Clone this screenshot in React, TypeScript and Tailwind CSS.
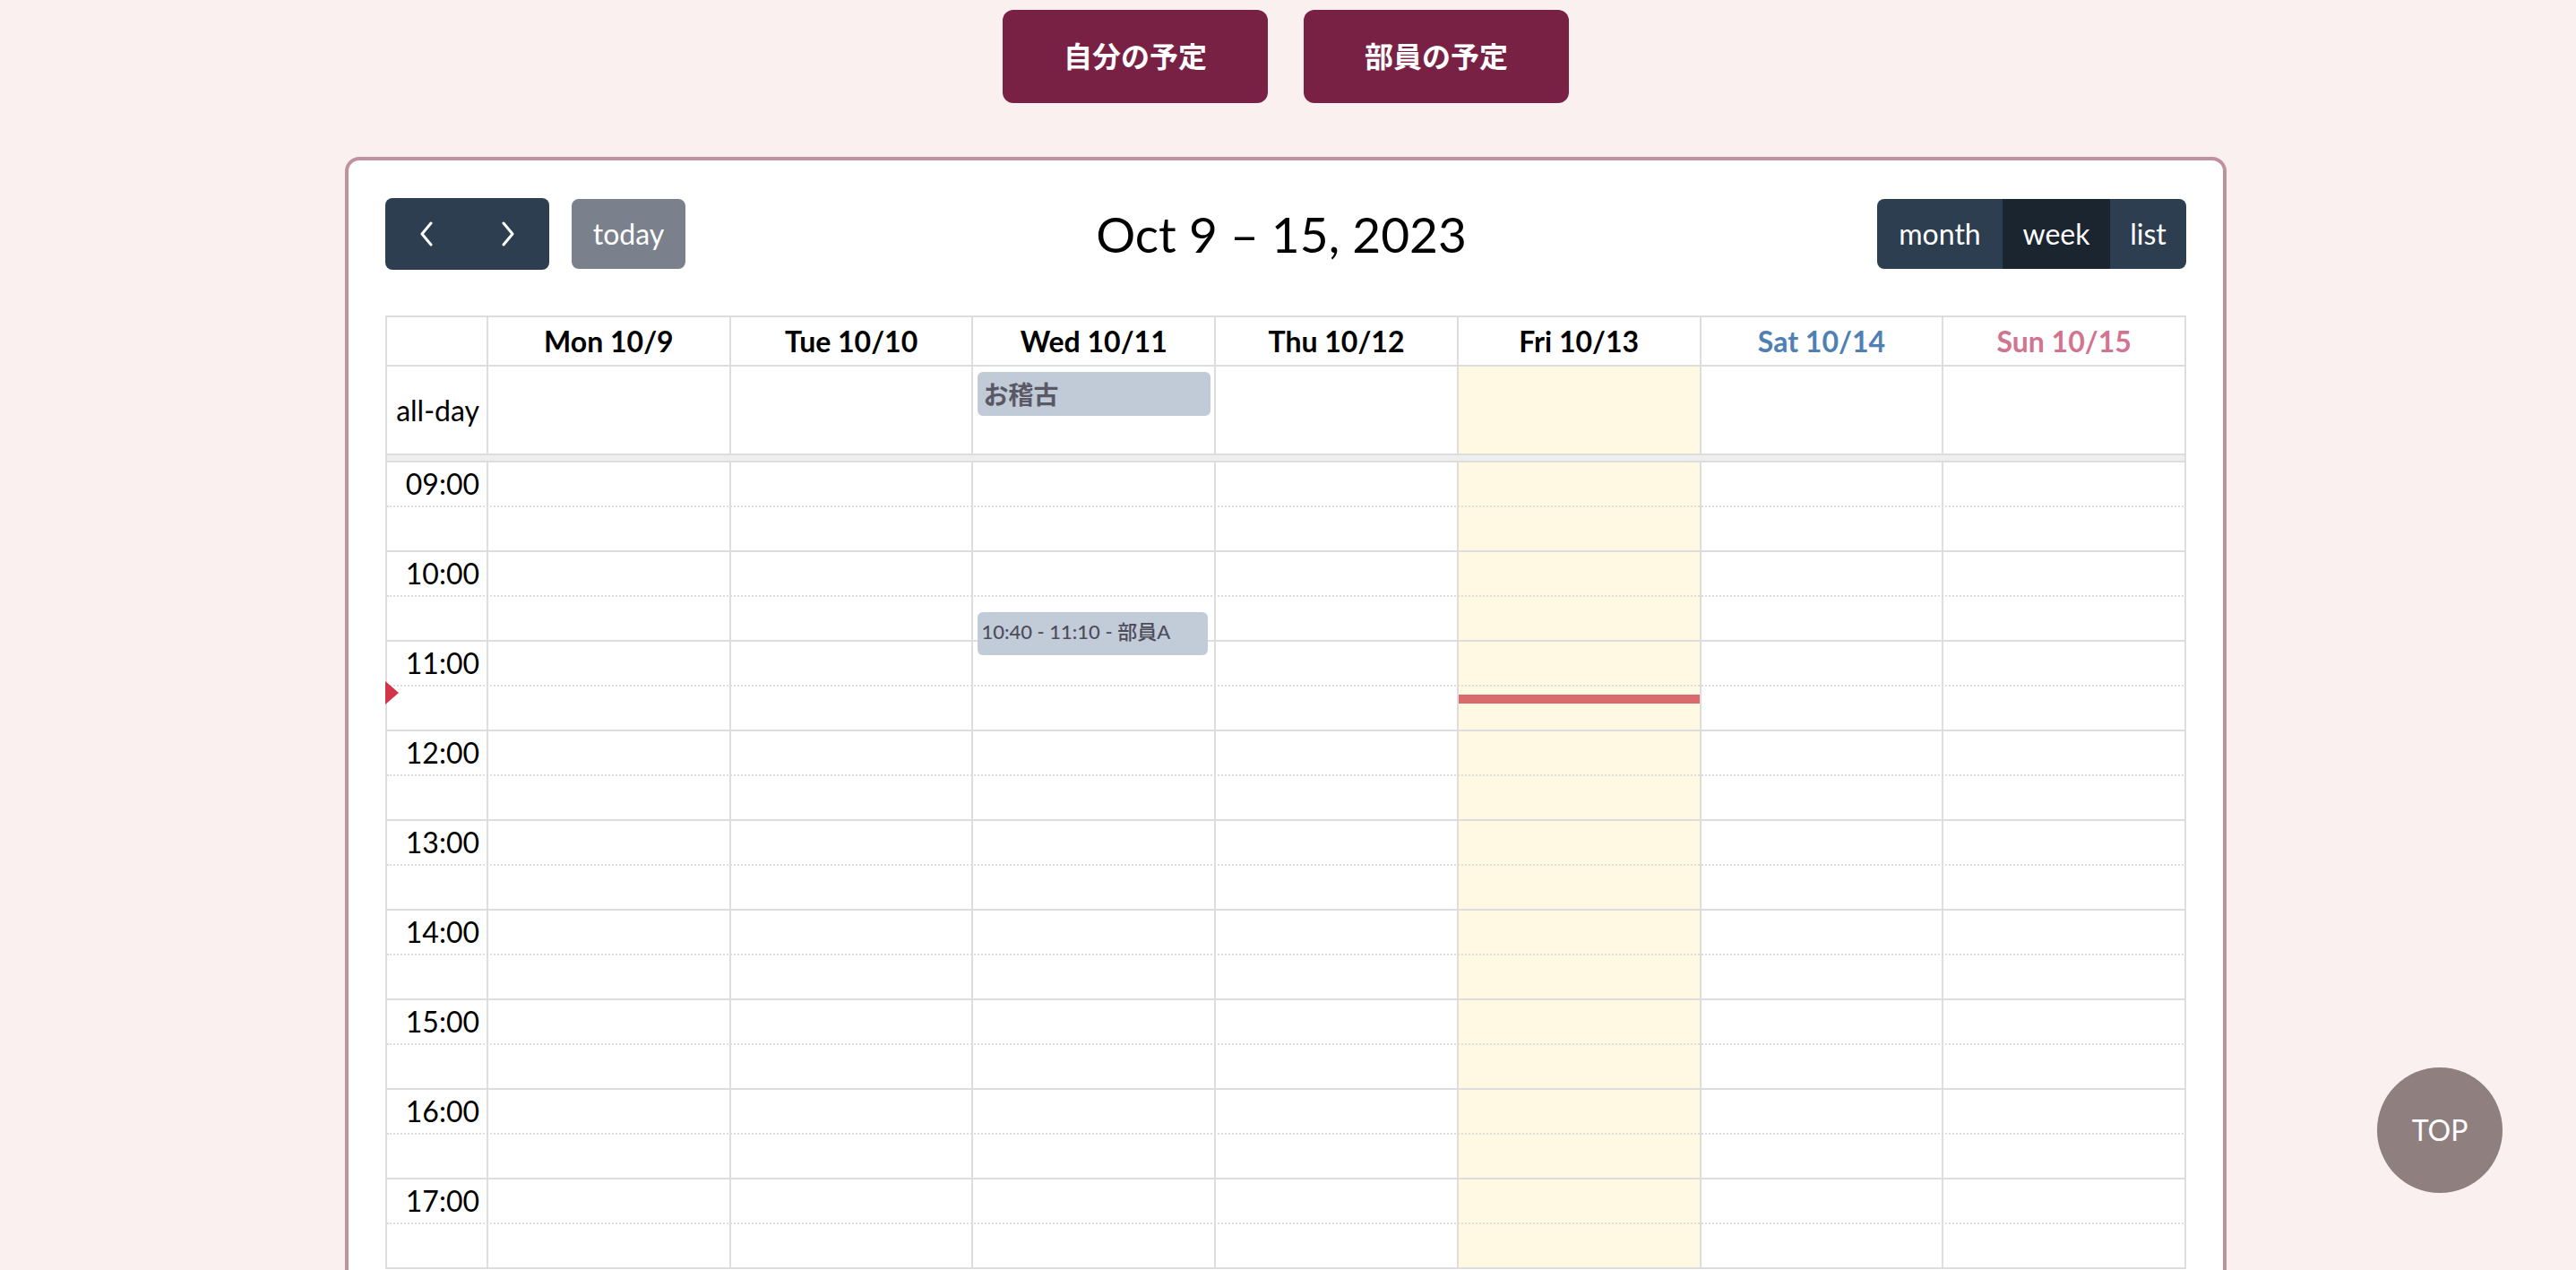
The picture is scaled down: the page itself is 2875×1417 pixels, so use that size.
import React from "react";

const days = [
  { label: "Mon 10/9", color: "text-black" },
  { label: "Tue 10/10", color: "text-black" },
  { label: "Wed 10/11", color: "text-black" },
  { label: "Thu 10/12", color: "text-black" },
  { label: "Fri 10/13", color: "text-black" },
  { label: "Sat 10/14", color: "text-[#4f80b4]" },
  { label: "Sun 10/15", color: "text-[#d27490]" },
];

const hours = [9, 10, 11, 12, 13, 14, 15, 16, 17];

function Chevron({ dir }: { dir: "left" | "right" }) {
  return (
    <svg width="18" height="30" viewBox="0 0 18 30" fill="none">
      <path
        d={dir === "left" ? "M14 3 L4 15 L14 27" : "M4 3 L14 15 L4 27"}
        stroke="white"
        strokeWidth="3"
        strokeLinecap="round"
        strokeLinejoin="round"
      />
    </svg>
  );
}

export default function App() {
  const gridCols = "grid grid-cols-[113px_repeat(7,minmax(0,1fr))]";
  return (
    <div className="relative h-[1417px] overflow-hidden bg-[#fbf0f0] pr-[5px] font-['Lato','Noto_Sans_CJK_JP',sans-serif] text-black">
      {/* top buttons */}
      <div className="flex justify-center gap-[40px] pt-[11px]">
        <button className="flex h-[104px] w-[296px] items-center justify-center rounded-[12px] bg-[#792144] text-[32px] font-bold text-white">
          自分の予定
        </button>
        <button className="flex h-[104px] w-[296px] items-center justify-center rounded-[12px] bg-[#792144] text-[32px] font-bold text-white">
          部員の予定
        </button>
      </div>

      {/* calendar card */}
      <div className="mx-auto mt-[60px] w-[2100px] rounded-[16px] border-4 border-[#c0919f] bg-white px-[41px] pb-[40px] pt-[42px]">
        {/* toolbar */}
        <div className="flex h-[80px] items-center justify-between">
          <div className="flex items-center gap-[25px]">
            <div className="flex h-[80px] w-[183px] overflow-hidden rounded-[8px] bg-[#2c3e50]">
              <div className="flex flex-1 items-center justify-center">
                <Chevron dir="left" />
              </div>
              <div className="flex flex-1 items-center justify-center">
                <Chevron dir="right" />
              </div>
            </div>
            <div className="flex h-[78px] w-[127px] items-center justify-center rounded-[8px] bg-[#7a818c] text-[32px] text-white">
              today
            </div>
          </div>
          <div className="text-[55px] leading-none font-normal">Oct 9 – 15, 2023</div>
          <div className="flex h-[78px] overflow-hidden rounded-[8px] text-[32px] text-white">
            <div className="flex w-[140px] items-center justify-center bg-[#2c3e50]">month</div>
            <div className="flex w-[120px] items-center justify-center bg-[#1a252f]">week</div>
            <div className="flex w-[85px] items-center justify-center bg-[#2c3e50]">list</div>
          </div>
        </div>

        {/* table */}
        <div className="mt-[51px] border-l-2 border-t-2 border-[#ddd]">
          {/* header */}
          <div className={gridCols}>
            <div className="h-[55px] border-b-2 border-r-2 border-[#ddd]" />
            {days.map((d) => (
              <div
                key={d.label}
                className={`flex h-[55px] items-center justify-center border-b-2 border-r-2 border-[#ddd] text-[32px] font-bold ${d.color}`}
              >
                {d.label}
              </div>
            ))}
          </div>

          {/* all-day */}
          <div className={gridCols}>
            <div className="flex h-[99px] items-center justify-end border-b-2 border-r-2 border-[#ddd] pr-[8px] text-[32px]">
              all-day
            </div>
            {days.map((d, i) => (
              <div
                key={d.label}
                className={`h-[99px] border-b-2 border-r-2 border-[#ddd] ${i === 4 ? "bg-[#fff9e3]" : ""}`}
              >
                {i === 2 && (
                  <div className="ml-[5px] mr-[4px] mt-[6px] flex h-[49px] items-center rounded-[6px] bg-[#c1cbd8] px-[6px] text-[28px] font-semibold text-[#5b5866]">
                    お稽古
                  </div>
                )}
              </div>
            ))}
          </div>

          {/* divider */}
          <div className="h-[8px] border-b-2 border-r-2 border-[#ddd] bg-[#eee]" />

          {/* time grid */}
          <div className="relative">
            {/* columns background */}
            <div className={`absolute inset-0 ${gridCols}`}>
              <div className="border-r-2 border-[#ddd]" />
              {days.map((d, i) => (
                <div
                  key={d.label}
                  className={`border-r-2 border-[#ddd] ${i === 4 ? "bg-[#fff9e3]" : ""}`}
                />
              ))}
            </div>

            {/* slot rows */}
            <div className="relative">
              {hours.map((h) => (
                <React.Fragment key={h}>
                  <div className="flex h-[50px] border-b-2 border-dotted border-[#ddd]">
                    <div className="w-[111px] pr-[8px] text-right text-[32px] leading-[48px]">
                      {String(h).padStart(2, "0")}:00
                    </div>
                  </div>
                  <div className="h-[50px] border-b-2 border-[#ddd]" />
                </React.Fragment>
              ))}
            </div>

            {/* events layer */}
            <div className={`pointer-events-none absolute inset-0 ${gridCols}`}>
              <div className="relative">
                <div className="absolute left-[-2px] top-[244px] h-0 w-0 border-y-[13px] border-l-[15px] border-y-transparent border-l-[#d4344a]" />
              </div>
              {days.map((d, i) => (
                <div key={d.label} className="relative">
                  {i === 2 && (
                    <div className="absolute left-[5px] right-[9px] top-[167px] h-[48px] rounded-[6px] bg-[#c2ccd9] px-[4px] pt-[8px] text-[22px] leading-tight font-medium whitespace-nowrap text-[#4e4c5a]">
                      10:40 - 11:10 - 部員A
                    </div>
                  )}
                  {i === 4 && (
                    <div className="absolute left-0 right-[2px] top-[259px] h-[10px] bg-[#d96b6f]" />
                  )}
                </div>
              ))}
            </div>
          </div>
        </div>
      </div>

      {/* TOP button */}
      <div className="absolute left-[2653px] top-[1191px] flex h-[140px] w-[140px] items-center justify-center rounded-full bg-[#8f7f7f] text-[32px] text-white">
        TOP
      </div>
    </div>
  );
}
